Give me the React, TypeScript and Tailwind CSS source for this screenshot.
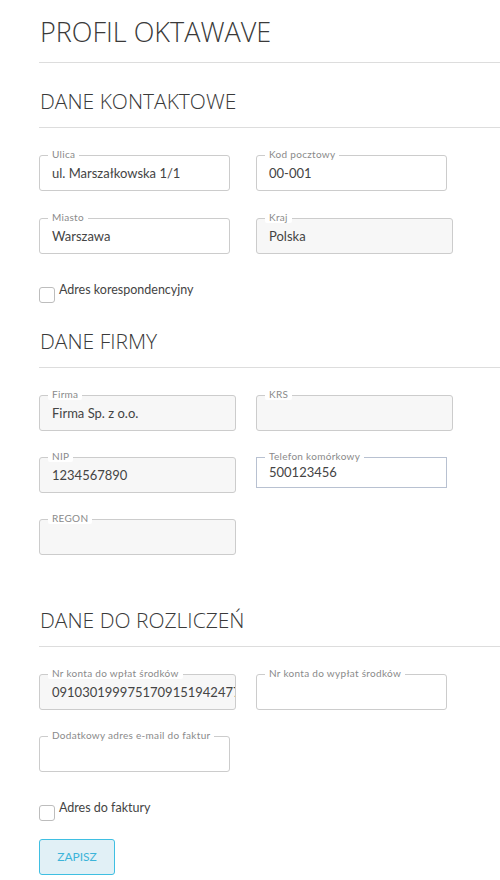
import React from "react";

type FieldProps = {
  label: string;
  value?: string;
  wide?: boolean;
  gray?: boolean;
  tel?: boolean;
};

function Field({ label, value, wide, gray, tel }: FieldProps) {
  return (
    <div
      className={`relative border ${wide ? "w-[197px]" : "w-[191px]"} ${
        tel ? "h-[31px] border-[#b8c1d1] rounded-none" : "h-[36px] border-[#cccccc] rounded-[3px]"
      } ${gray ? "bg-[#f7f7f7]" : "bg-white"}`}
    >
      <span className="absolute left-[8px] top-[-7px] h-[11px] px-[4px] bg-white rounded-[2px] text-[10px] leading-[11px] tracking-[0.3px] text-[#8a8a8a] whitespace-nowrap">
        {label}
      </span>
      <div className="h-full flex items-center pl-[12px] pt-[1px] overflow-hidden whitespace-nowrap text-[13px] text-[#444444]">
        {value}
      </div>
    </div>
  );
}

function Check({ label }: { label: string }) {
  return (
    <div className="flex items-start gap-[4px]">
      <div className="w-[16px] h-[16px] border border-[#bdbdbd] rounded-[3px] bg-white shrink-0" />
      <span className="text-[12.5px] leading-[14px] text-[#444444] -mt-[4px]">{label}</span>
    </div>
  );
}

function H2({ children, className = "" }: { children: React.ReactNode; className?: string }) {
  return (
    <h2
      className={`text-[21px] leading-[28px] font-light text-[#3a3a3a] ${className}`}
      style={{ fontFamily: '"Open Sans", sans-serif' }}
    >
      {children}
    </h2>
  );
}

export default function App() {
  return (
    <div
      className="w-[500px] min-h-[880px] bg-white pl-[39px] overflow-hidden"
      style={{ fontFamily: 'Lato, "Open Sans", sans-serif' }}
    >
      <h1
        className="mt-[15px] text-[27px] leading-[34px] font-light text-[#3a3a3a] pl-[1px]"
        style={{ fontFamily: '"Open Sans", sans-serif' }}
      >
        PROFIL OKTAWAVE
      </h1>
      <div className="mt-[13px] border-t border-[#dddddd]" />

      <H2 className="mt-[24px] pl-[1px]">DANE KONTAKTOWE</H2>
      <div className="mt-[12px] border-t border-[#dddddd]" />

      <div className="mt-[27px] grid grid-cols-[217px_1fr] gap-y-[27px]">
        <Field label="Ulica" value="ul. Marszałkowska 1/1" />
        <Field label="Kod pocztowy" value="00-001" />
        <Field label="Miasto" value="Warszawa" />
        <Field label="Kraj" value="Polska" wide gray />
      </div>

      <div className="mt-[33px]">
        <Check label="Adres korespondencyjny" />
      </div>

      <H2 className="mt-[24px] pl-[1px]">DANE FIRMY</H2>
      <div className="mt-[12px] border-t border-[#dddddd]" />

      <div className="mt-[27px] grid grid-cols-[217px_1fr] gap-y-[26px]">
        <Field label="Firma" value="Firma Sp. z o.o." wide gray />
        <Field label="KRS" wide gray />
        <Field label="NIP" value="1234567890" wide gray />
        <Field label="Telefon komórkowy" value="500123456" tel />
        <Field label="REGON" wide gray />
      </div>

      <H2 className="mt-[51px] pl-[1px]">DANE DO ROZLICZEŃ</H2>
      <div className="mt-[12px] border-t border-[#dddddd]" />

      <div className="mt-[27px] grid grid-cols-[217px_1fr] gap-y-[26px]">
        <Field label="Nr konta do wpłat środków" value="09103019997517091519424773" wide gray />
        <Field label="Nr konta do wypłat środków" />
        <Field label="Dodatkowy adres e-mail do faktur" />
      </div>

      <div className="mt-[33px]">
        <Check label="Adres do faktury" />
      </div>

      <button className="mt-[18px] w-[76px] h-[36px] rounded-[3px] border border-[#3fbfe2] bg-[#e1f0f6] text-[12px] text-[#3cb4d9] flex items-center justify-center">
        ZAPISZ
      </button>
    </div>
  );
}
